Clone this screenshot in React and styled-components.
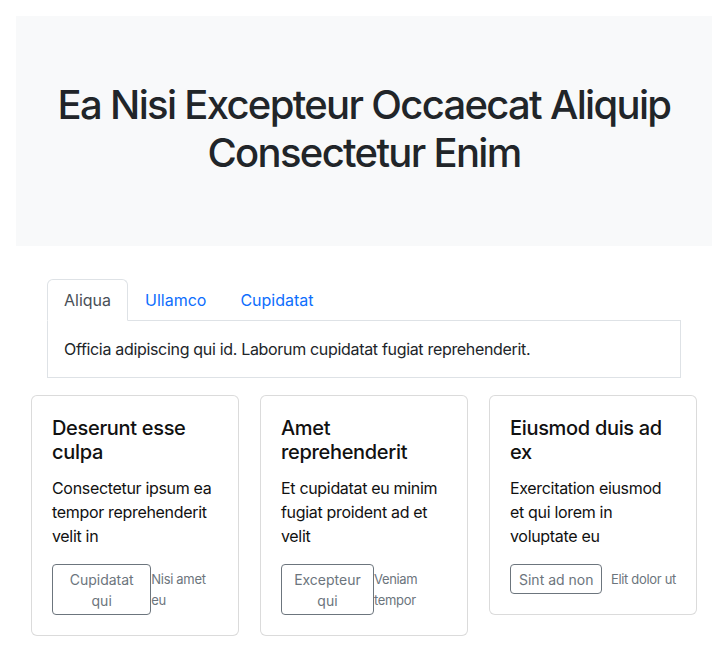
import React, { useState } from "react";
import styled, { createGlobalStyle } from "styled-components";

const Global = createGlobalStyle`
  * { box-sizing: border-box; }
  body {
    margin: 0;
    font-family: Inter, "Noto Sans", "Liberation Sans", sans-serif;
    color: #212529;
    background: #fff;
    font-size: 16px;
    line-height: 1.5;
    letter-spacing: -0.02em;
  }
`;

const Page = styled.div`
  padding: 16px 16px 0;
`;

const Hero = styled.header`
  background: #f8f9fa;
  padding: 65px 16px 69px;
  text-align: center;
`;

const HeroTitle = styled.h1`
  margin: 0;
  font-size: 40px;
  font-weight: 500;
  line-height: 48px;
  letter-spacing: -0.042em;
  color: #212529;
`;

const Main = styled.main`
  padding: 33px 15px 0;
`;

const TabsBlock = styled.section`
  margin: 0 16px 17px;
`;

const TabList = styled.nav`
  display: flex;
  border-bottom: 1px solid #dee2e6;
`;

const Tab = styled.button`
  font: inherit;
  font-size: 16px;
  line-height: 24px;
  padding: 8px 16px;
  margin-bottom: -1px;
  background: ${(p) => (p.$active ? "#fff" : "transparent")};
  color: ${(p) => (p.$active ? "#495057" : "#0d6efd")};
  border: 1px solid ${(p) => (p.$active ? "#dee2e6" : "transparent")};
  border-bottom-color: ${(p) => (p.$active ? "#fff" : "transparent")};
  border-radius: 6px 6px 0 0;
  cursor: pointer;
`;

const TabPanel = styled.div`
  border: 1px solid #dee2e6;
  border-top: none;
  padding: 16px;
  font-size: 16px;
  line-height: 24px;
`;

const CardGrid = styled.div`
  display: grid;
  grid-template-columns: repeat(3, 1fr);
  gap: 21px;
  align-items: start;
`;

const Card = styled.article`
  border: 1px solid rgba(0, 0, 0, 0.14);
  border-radius: 6px;
  padding: 20px;
  background: #fff;
`;

const CardTitle = styled.h5`
  margin: 0 0 12px;
  font-size: 20px;
  line-height: 24px;
  font-weight: 500;
  color: #111;
`;

const CardText = styled.p`
  margin: 0 0 16px;
  font-size: 16px;
  line-height: 24px;
  color: #111;
`;

const CardFooter = styled.div`
  display: flex;
  justify-content: space-between;
  align-items: center;
`;

const OutlineButton = styled.button`
  font: inherit;
  font-size: 14px;
  line-height: 21px;
  padding: 3.5px 8px;
  color: #6c757d;
  background: transparent;
  border: 1px solid #6c757d;
  border-radius: 4px;
  text-align: center;
`;

const Muted = styled.small`
  font-size: 13px;
  line-height: 21px;
  color: #6c757d;
`;

const tabs = [
  { label: "Aliqua", text: "Officia adipiscing qui id. Laborum cupidatat fugiat reprehenderit." },
  { label: "Ullamco", text: "Ullamco commodo nostrud. Dolore sint aliqua magna." },
  { label: "Cupidatat", text: "Cupidatat velit esse. Irure duis consequat." },
];

const cards = [
  { title: "Deserunt esse culpa", text: "Consectetur ipsum ea tempor reprehenderit velit in", btn: "Cupidatat qui", note: "Nisi amet eu" },
  { title: "Amet reprehenderit", text: "Et cupidatat eu minim fugiat proident ad et velit", btn: "Excepteur qui", note: "Veniam tempor" },
  { title: "Eiusmod duis ad ex", text: "Exercitation eiusmod et qui lorem in voluptate eu", btn: "Sint ad non", note: "Elit dolor ut" },
];

export default function App() {
  const [active, setActive] = useState(0);
  return (
    <>
      <Global />
      <Page>
        <Hero>
          <HeroTitle>Ea Nisi Excepteur Occaecat Aliquip Consectetur Enim</HeroTitle>
        </Hero>
        <Main>
          <TabsBlock>
            <TabList>
              {tabs.map((t, i) => (
                <Tab key={t.label} $active={i === active} onClick={() => setActive(i)}>
                  {t.label}
                </Tab>
              ))}
            </TabList>
            <TabPanel>{tabs[active].text}</TabPanel>
          </TabsBlock>
          <CardGrid>
            {cards.map((c) => (
              <Card key={c.title}>
                <CardTitle>{c.title}</CardTitle>
                <CardText>{c.text}</CardText>
                <CardFooter>
                  <OutlineButton>{c.btn}</OutlineButton>
                  <Muted>{c.note}</Muted>
                </CardFooter>
              </Card>
            ))}
          </CardGrid>
        </Main>
      </Page>
    </>
  );
}
